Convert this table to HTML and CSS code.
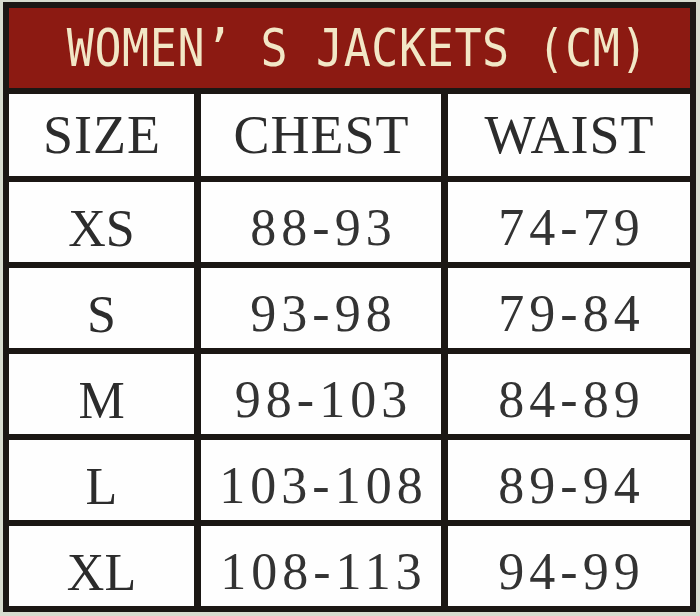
FILE: index.html
```html
<!DOCTYPE html>
<html lang="en">
<head>
<meta charset="utf-8">
<title>Women's Jackets (CM)</title>
<link rel="stylesheet" href="styles.css">
</head>
<body>
<div class="chart">
  <div class="title"><span class="title-text">WOMEN’ S JACKETS (CM)</span></div>
  <div class="grid">
    <div class="cell head">SIZE</div>
    <div class="cell head">CHEST</div>
    <div class="cell head">WAIST</div>

    <div class="cell size">XS</div>
    <div class="cell num">88-93</div>
    <div class="cell num">74-79</div>

    <div class="cell size">S</div>
    <div class="cell num">93-98</div>
    <div class="cell num">79-84</div>

    <div class="cell size">M</div>
    <div class="cell num">98-103</div>
    <div class="cell num">84-89</div>

    <div class="cell size">L</div>
    <div class="cell num">103-108</div>
    <div class="cell num">89-94</div>

    <div class="cell size">XL</div>
    <div class="cell num">108-113</div>
    <div class="cell num">94-99</div>
  </div>
</div>
</body>
</html>
```
FILE: styles.css
```css
html, body {
  margin: 0;
  padding: 0;
  background: #d8dccf;
}

body {
  width: 700px;
  height: 616px;
  overflow: hidden;
}

.chart {
  margin: 2px 0 0 3px;
  width: 681px;
  border: 6px solid #1b1714;
  background: #1b1714;
}

.title {
  height: 80px;
  background: #8c1a12;
  display: flex;
  align-items: center;
  justify-content: center;
  border-bottom: 6px solid #1b1714;
}

.title-text {
  font-family: "DejaVu Sans Mono", "Liberation Mono", monospace;
  font-size: 45px;
  color: #f2e7c6;
  white-space: pre;
  display: inline-block;
  transform: scaleY(1.16);
  letter-spacing: 0.6px;
  padding-left: 16px;
}

.grid {
  display: grid;
  grid-template-columns: 185px 240px 242px;
  grid-template-rows: 82px repeat(5, 80px);
  column-gap: 7px;
  row-gap: 6px;
}

.cell {
  background: #fefefe;
  display: flex;
  align-items: center;
  justify-content: center;
  font-family: "Liberation Serif", "Times New Roman", serif;
  color: #2c2c2c;
  box-sizing: border-box;
}

.head {
  font-size: 54px;
  letter-spacing: 1px;
  padding-left: 1px;
}

.size {
  font-size: 52px;
  padding-top: 12px;
}

.num {
  font-size: 52px;
  letter-spacing: 5px;
  padding-left: 5px;
  padding-top: 10px;
  color: #333333;
}
```
